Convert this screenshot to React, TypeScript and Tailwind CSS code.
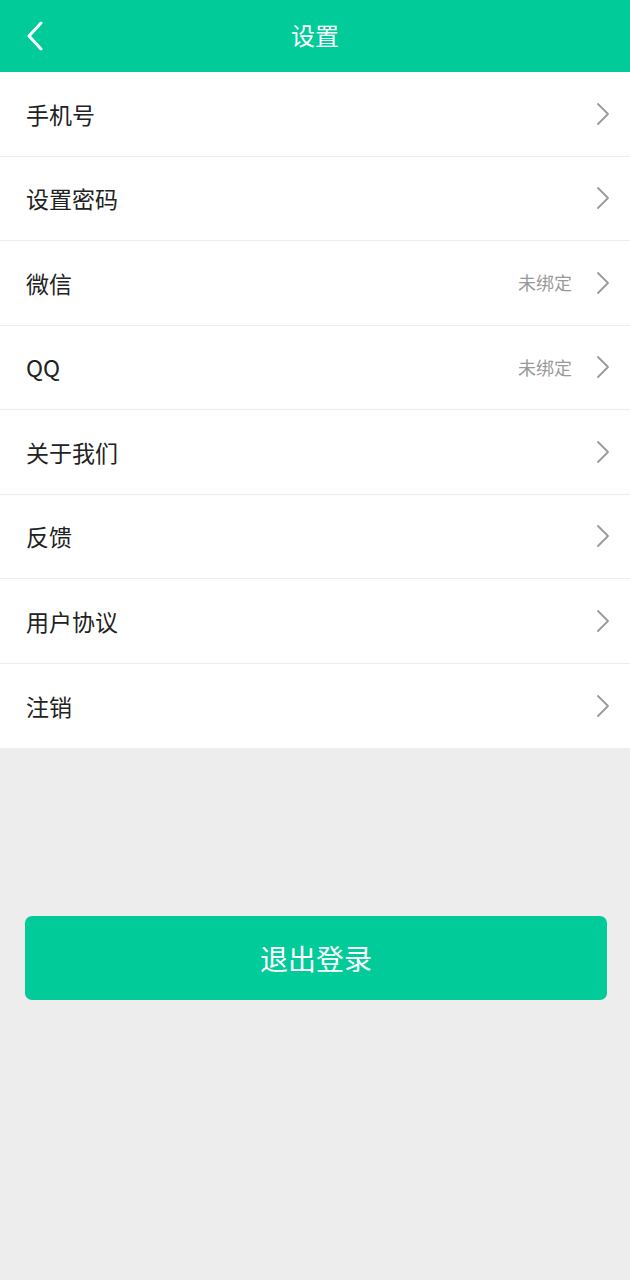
const rows = [
	{ label: "手机号" },
	{ label: "设置密码" },
	{ label: "微信", value: "未绑定" },
	{ label: "QQ", value: "未绑定" },
	{ label: "关于我们" },
	{ label: "反馈" },
	{ label: "用户协议" },
	{ label: "注销" },
];

const font = { fontFamily: '"Noto Sans CJK SC", "Noto Sans", sans-serif' };

const Chevron = () => (
	<svg width="14" height="24" viewBox="0 0 14 24" fill="none" className="ml-6">
		<path d="M2 2 L12 12 L2 22" stroke="#9a9a9a" strokeWidth="1.8" strokeLinecap="round" strokeLinejoin="round" />
	</svg>
);

const App = () => {
	return (
		<main className="flex flex-col w-[630px] h-[1280px] bg-[#ededed]" style={font}>
			<header className="relative flex items-center justify-center h-[72px] bg-[#02cb9a] shrink-0">
				<svg width="20" height="30" viewBox="0 0 20 30" fill="none" className="absolute left-[25px] top-[21px]">
					<path d="M16 2 L4 15 L16 28" stroke="#ffffff" strokeWidth="3" strokeLinecap="round" strokeLinejoin="round" />
				</svg>
				<h1 className="text-[24px] text-white -mt-[2px]">设置</h1>
			</header>
			<section className="flex flex-col bg-white">
				{rows.map((row, i) => (
					<div
						key={row.label}
						className={
							i < rows.length - 1
								? "flex items-center h-[84.5px] pl-[26px] pr-[20px] border-b border-[#ececec]"
								: "flex items-center h-[84.5px] pl-[26px] pr-[20px]"
						}
					>
						<span className="flex-1 text-[23px] text-[#222222]">{row.label}</span>
						{row.value && <span className="text-[18px] text-[#9a9a9a]">{row.value}</span>}
						<Chevron />
					</div>
				))}
			</section>
			<div className="pl-[25px] pr-[23px] pt-[168px]">
				<button className="flex items-center justify-center w-full h-[84px] rounded-[7px] bg-[#02cb9a] text-[28px] text-white">
					退出登录
				</button>
			</div>
		</main>
	);
};

export default App;
